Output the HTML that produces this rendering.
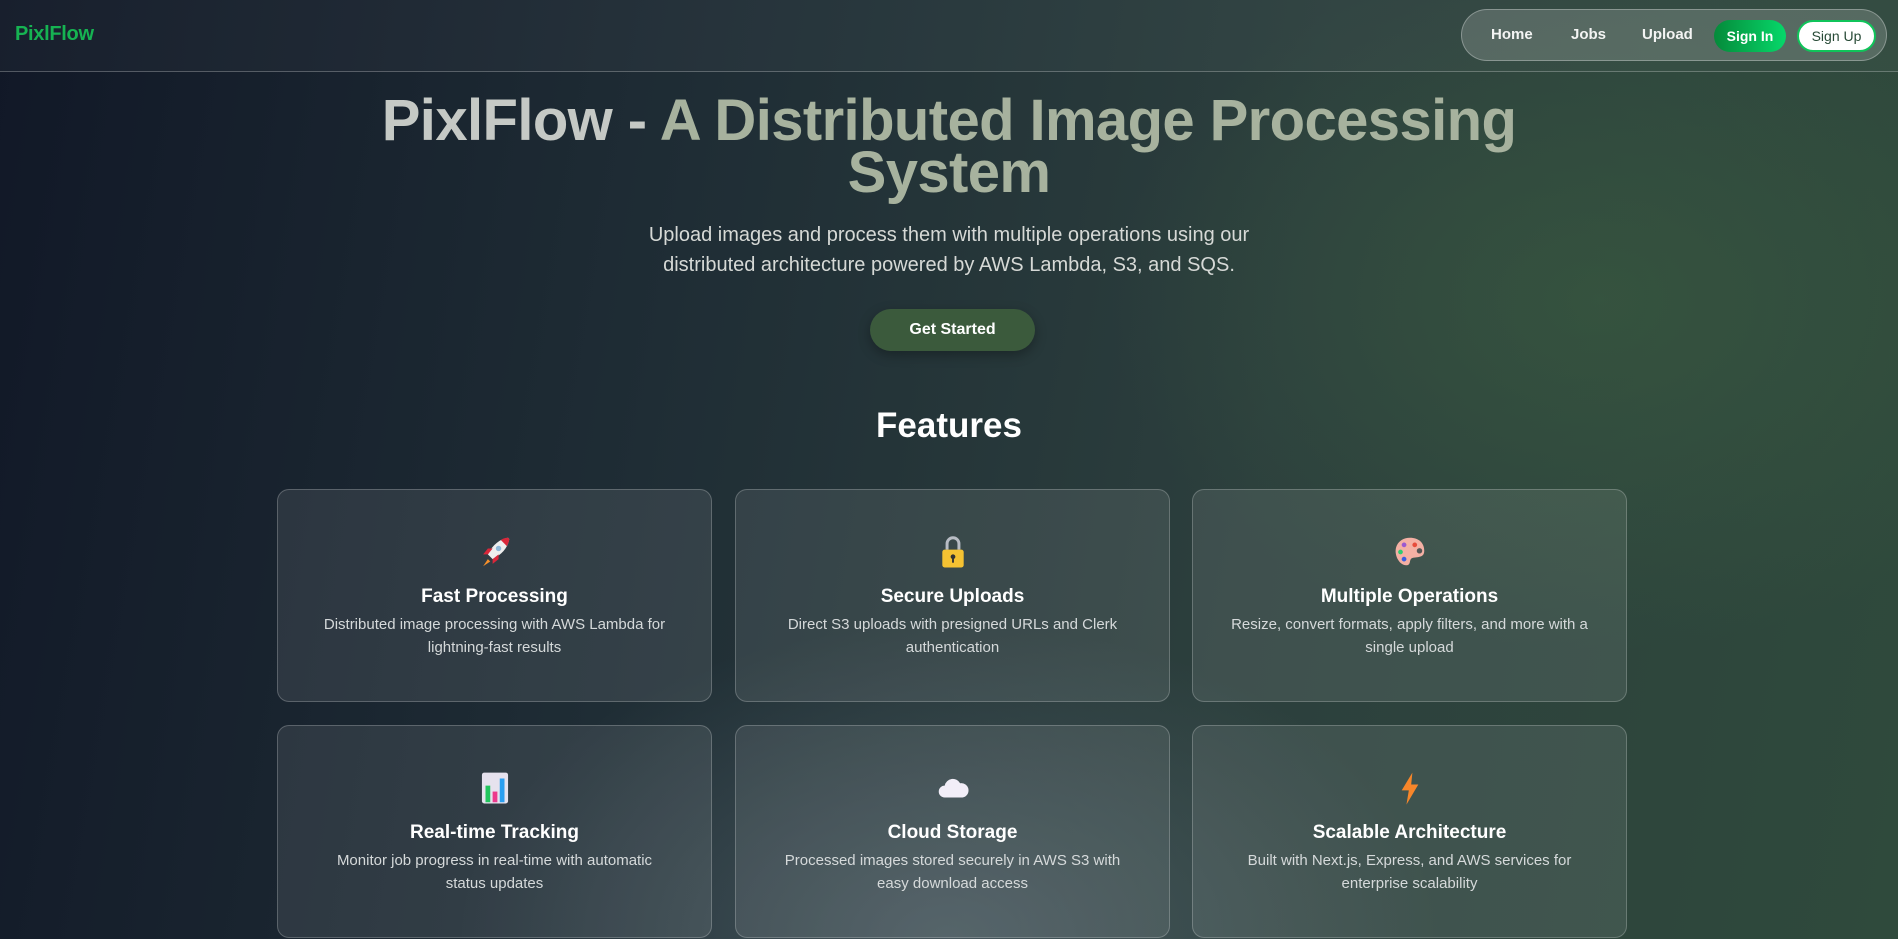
<!DOCTYPE html>
<html><head><meta charset="utf-8"><style>
*{box-sizing:border-box;margin:0;padding:0}
html,body{width:1898px;height:939px;overflow:hidden}
body{font-family:"Liberation Sans",sans-serif;color:#fff;position:relative;
background:
radial-gradient(ellipse 700px 450px at 950px 939px,rgba(95,110,120,.55),transparent 70%),
radial-gradient(ellipse 700px 500px at 1600px 300px,rgba(60,95,65,.55),transparent 70%),
linear-gradient(100deg,#111827 0%,#1f2d35 35%,#2c3f3d 65%,#2f4a3c 100%);}
.nav{position:absolute;left:0;top:0;width:1898px;height:72px;border-bottom:1px solid rgba(255,255,255,.25);background:rgba(255,255,255,.03)}
.logo{position:absolute;left:15px;top:23px;font-size:20px;font-weight:bold;color:#16b352;letter-spacing:-.3px}
.pill{position:absolute;left:1461px;top:9px;width:426px;height:52px;border-radius:26px;background:rgba(255,255,255,.17);border:1px solid rgba(255,255,255,.3)}
.pill a{position:absolute;top:16px;font-size:15px;font-weight:bold;color:#f3f4f3}
.si{position:absolute;left:252px;top:10px;width:72px;height:32px;border-radius:16px;background:linear-gradient(90deg,#058a3a,#06d86a);font-size:14px;font-weight:bold;text-align:center;line-height:32px}
.su{position:absolute;left:335px;top:10px;width:79px;height:32px;border-radius:16px;background:#fff;border:2px solid #10c45a;color:#274a36;font-size:14px;text-align:center;line-height:28px}
h1{position:absolute;left:0;width:1898px;top:95px;text-align:center;font-size:58px;line-height:52px;font-weight:bold;color:#a7b29e;letter-spacing:-.6px}
h1 span{color:#c5c9c5}
.sub{position:absolute;left:0;width:1898px;top:220px;text-align:center;font-size:20px;line-height:30px;color:#d6d9d6}
.btn{position:absolute;left:870px;top:309px;width:165px;height:42px;border-radius:21px;background:#3b5a3c;text-align:center;line-height:42px;font-size:16px;font-weight:bold;box-shadow:0 4px 12px rgba(0,0,0,.3)}
h2{position:absolute;left:0;width:1898px;top:406px;text-align:center;font-size:35px;font-weight:bold}
.card{position:absolute;width:435px;height:213px;border-radius:12px;background:rgba(255,255,255,.09);border:1px solid rgba(255,255,255,.22);text-align:center}
.card svg{position:absolute;left:198px;top:43px}
.card h3{position:absolute;left:0;right:0;top:96px;font-size:19px;font-weight:bold}
.card p{position:absolute;left:30px;right:30px;top:123px;font-size:15px;line-height:23px;color:#d5d9da}
</style></head><body>
<div class="nav"><div class="logo">PixlFlow</div>
<div class="pill"><a style="left:29px">Home</a><a style="left:109px">Jobs</a><a style="left:180px">Upload</a><div class="si">Sign In</div><div class="su">Sign Up</div></div></div>
<h1><span>PixlFlow -</span> A Distributed Image Processing<br>System</h1>
<div class="sub">Upload images and process them with multiple operations using our<br>distributed architecture powered by AWS Lambda, S3, and SQS.</div>
<div class="btn">Get Started</div>
<h2>Features</h2>

<div class="card" style="left:277px;top:489px">
<svg width="38" height="38" viewBox="0 0 32 32"><path d="M27 4 C20 5 14 10 10 18 L14 22 C22 18 27 12 28 5Z" fill="#eee"/><path d="M27 4 C24 4 22 5 21 6 L26 11 C27 9 28 7 28 5Z" fill="#d9273a"/><circle cx="19" cy="13" r="2.3" fill="#8fb8d8"/><path d="M10 18 L6 18 L10 13 L14 13Z M14 22 L14 26 L19 22 L19 18Z" fill="#d9273a"/><path d="M10 22 L6 28 L12 24Z" fill="#f7902a"/></svg>
<h3>Fast Processing</h3><p>Distributed image processing with AWS Lambda for lightning-fast results</p></div>

<div class="card" style="left:735px;top:489px">
<svg width="38" height="38" viewBox="0 0 32 32"><path d="M11 14 V9 a5 5 0 0 1 10 0 V14" fill="none" stroke="#b8bcc4" stroke-width="2.5"/><rect x="7" y="14" width="18" height="15" rx="2" fill="#f5c232"/><circle cx="16" cy="20" r="2" fill="#333"/><rect x="15.2" y="20" width="1.6" height="5" fill="#333"/></svg>
<h3>Secure Uploads</h3><p>Direct S3 uploads with presigned URLs and Clerk authentication</p></div>

<div class="card" style="left:1192px;top:489px">
<svg width="38" height="38" viewBox="0 0 32 32"><path d="M16 4 C8 4 3 10 4 17 C5 24 10 28 14 27 C17 26 15 22 18 21 C22 20 28 21 28 15 C28 8 23 4 16 4Z" fill="#f4b0a4"/><circle cx="11" cy="10" r="2" fill="#9b59d0"/><circle cx="8" cy="16" r="2" fill="#2ecc71"/><circle cx="11" cy="22" r="2" fill="#3a5ee0"/><circle cx="20" cy="10" r="2" fill="#e74c3c"/><circle cx="24" cy="15" r="2.3" fill="#555"/></svg>
<h3>Multiple Operations</h3><p>Resize, convert formats, apply filters, and more with a single upload</p></div>

<div class="card" style="left:277px;top:725px">
<svg width="38" height="38" viewBox="0 0 32 32"><rect x="5" y="3" width="22" height="26" rx="2" fill="#e6e2ee"/><rect x="8" y="14" width="4" height="14" fill="#22c55e"/><rect x="14" y="19" width="4" height="9" fill="#ec3a8c"/><rect x="20" y="8" width="4" height="20" fill="#2b9ff0"/></svg>
<h3>Real-time Tracking</h3><p style="left:45px;right:45px">Monitor job progress in real-time with automatic status updates</p></div>

<div class="card" style="left:735px;top:725px">
<svg width="38" height="38" viewBox="0 0 32 32"><path d="M9 24 a5 5 0 0 1 0-10 a7 7 0 0 1 13-2 a6 6 0 0 1 2 12Z" fill="#f2eef8"/></svg>
<h3>Cloud Storage</h3><p style="left:45px;right:45px">Processed images stored securely in AWS S3 with easy download access</p></div>

<div class="card" style="left:1192px;top:725px">
<svg width="38" height="38" viewBox="0 0 32 32"><path d="M18 3 L9 18 H15 L13 30 L23 13 H17Z" fill="#f7862a"/></svg>
<h3>Scalable Architecture</h3><p style="left:45px;right:45px">Built with Next.js, Express, and AWS services for enterprise scalability</p></div>
</body></html>
